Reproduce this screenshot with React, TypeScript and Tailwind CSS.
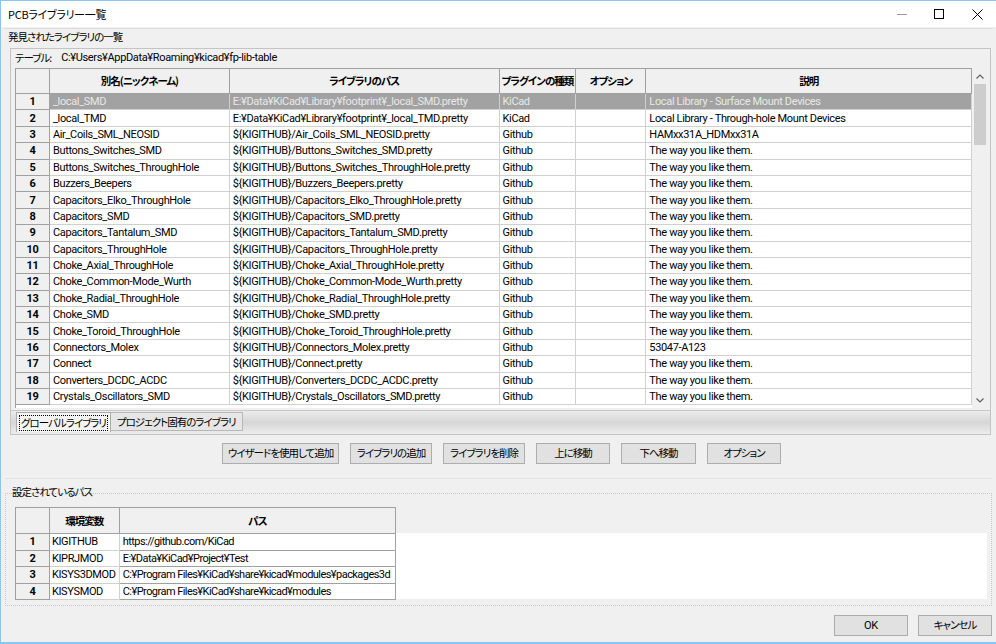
const rows: [string, string, string, string][] = [
  ["_local_SMD", "E:¥Data¥KiCad¥Library¥footprint¥_local_SMD.pretty", "KiCad", "Local Library - Surface Mount Devices"],
  ["_local_TMD", "E:¥Data¥KiCad¥Library¥footprint¥_local_TMD.pretty", "KiCad", "Local Library - Through-hole Mount Devices"],
  ["Air_Coils_SML_NEOSID", "${KIGITHUB}/Air_Coils_SML_NEOSID.pretty", "Github", "HAMxx31A_HDMxx31A"],
  ["Buttons_Switches_SMD", "${KIGITHUB}/Buttons_Switches_SMD.pretty", "Github", "The way you like them."],
  ["Buttons_Switches_ThroughHole", "${KIGITHUB}/Buttons_Switches_ThroughHole.pretty", "Github", "The way you like them."],
  ["Buzzers_Beepers", "${KIGITHUB}/Buzzers_Beepers.pretty", "Github", "The way you like them."],
  ["Capacitors_Elko_ThroughHole", "${KIGITHUB}/Capacitors_Elko_ThroughHole.pretty", "Github", "The way you like them."],
  ["Capacitors_SMD", "${KIGITHUB}/Capacitors_SMD.pretty", "Github", "The way you like them."],
  ["Capacitors_Tantalum_SMD", "${KIGITHUB}/Capacitors_Tantalum_SMD.pretty", "Github", "The way you like them."],
  ["Capacitors_ThroughHole", "${KIGITHUB}/Capacitors_ThroughHole.pretty", "Github", "The way you like them."],
  ["Choke_Axial_ThroughHole", "${KIGITHUB}/Choke_Axial_ThroughHole.pretty", "Github", "The way you like them."],
  ["Choke_Common-Mode_Wurth", "${KIGITHUB}/Choke_Common-Mode_Wurth.pretty", "Github", "The way you like them."],
  ["Choke_Radial_ThroughHole", "${KIGITHUB}/Choke_Radial_ThroughHole.pretty", "Github", "The way you like them."],
  ["Choke_SMD", "${KIGITHUB}/Choke_SMD.pretty", "Github", "The way you like them."],
  ["Choke_Toroid_ThroughHole", "${KIGITHUB}/Choke_Toroid_ThroughHole.pretty", "Github", "The way you like them."],
  ["Connectors_Molex", "${KIGITHUB}/Connectors_Molex.pretty", "Github", "53047-A123"],
  ["Connect", "${KIGITHUB}/Connect.pretty", "Github", "The way you like them."],
  ["Converters_DCDC_ACDC", "${KIGITHUB}/Converters_DCDC_ACDC.pretty", "Github", "The way you like them."],
  ["Crystals_Oscillators_SMD", "${KIGITHUB}/Crystals_Oscillators_SMD.pretty", "Github", "The way you like them."],
];

const envRows: [string, string][] = [
  ["KIGITHUB", "https://github.com/KiCad"],
  ["KIPRJMOD", "E:¥Data¥KiCad¥Project¥Test"],
  ["KISYS3DMOD", "C:¥Program Files¥KiCad¥share¥kicad¥modules¥packages3d"],
  ["KISYSMOD", "C:¥Program Files¥KiCad¥share¥kicad¥modules"],
];

// latin text is narrow (Meiryo UI-like), japanese uses proportional kana
const lat = "font-['Roboto','Liberation_Sans',sans-serif] text-[11px] tracking-[-0.35px]";
const jp = "font-['Noto_Sans_CJK_JP','Noto_Sans',sans-serif] text-[10.5px] tracking-[-1px] [font-feature-settings:'palt']";

function Btn({ label, w, latin }: { label: string; w: string; latin?: boolean }) {
  return (
    <button
      type="button"
      className={`${w} h-[21px] border border-[#adadad] bg-[#e1e1e1] text-black leading-none ${latin ? lat : jp}`}
    >
      {label}
    </button>
  );
}

export default function App() {
  return (
    <div className="w-[996px] h-[644px] bg-[#f0f0f0] border-t border-l border-b-2 border-[#8cc6f0] flex flex-col text-black overflow-hidden">
      {/* Title bar */}
      <div className="h-[26px] bg-white flex items-center shrink-0">
        <span className="pl-[7px] font-['Noto_Sans_CJK_JP',sans-serif] text-[11px] tracking-[-0.3px] [font-feature-settings:'palt']">PCBライブラリー一覧</span>
        <div className="ml-auto flex items-center h-full">
          <div className="w-[36px] flex justify-center">
            <div className="w-[10px] h-px bg-[#999]" />
          </div>
          <div className="w-[38px] flex justify-center">
            <div className="w-[10px] h-[10px] border border-black" />
          </div>
          <div className="w-[38px] flex justify-center">
            <svg width="11" height="11" viewBox="0 0 11 11">
              <path d="M0.5 0.5 L10.5 10.5 M10.5 0.5 L0.5 10.5" stroke="#000" strokeWidth="1" />
            </svg>
          </div>
        </div>
      </div>

      {/* Library group */}
      <div className="mx-[3px] mt-[1px] border-t border-[#dcdcdc]">
        <div className={`pl-[4px] h-[16px] leading-[16px] ${jp} tracking-[-1.3px]`}>発見されたライブラリの一覧</div>
        <div className="ml-[6px] mr-[2px] mt-[3px] h-[387px] border border-[#c4c4c4] bg-[#f0f0f0] flex flex-col">
          <div className="h-[18px] flex items-center pl-[4px] gap-[10px]">
            <span className={jp}>テーブル:</span>
            <span className={lat}>C:¥Users¥AppData¥Roaming¥kicad¥fp-lib-table</span>
          </div>
          <div className="ml-[4px] mr-[1px] mt-[1px] h-[340px] flex">
            <div className="w-[957px] bg-white border-l border-t border-[#a0a0a0] flex flex-col overflow-hidden">
              {/* header */}
              <div className={`h-[25px] flex shrink-0 bg-[#f0f0f0] font-bold ${jp}`}>
                <div className="w-[34px] border-r border-b border-[#a0a0a0]" />
                <div className="w-[180px] border-r border-b border-[#a0a0a0] flex items-center justify-center">別名(ニックネーム)</div>
                <div className="w-[270px] border-r border-b border-[#a0a0a0] flex items-center justify-center">ライブラリのパス</div>
                <div className="w-[77px] border-r border-b border-[#a0a0a0] flex items-center justify-center whitespace-nowrap">プラグインの種類</div>
                <div className="w-[70px] border-r border-b border-[#a0a0a0] flex items-center justify-center">オプション</div>
                <div className="w-[326px] border-r border-b border-[#a0a0a0] flex items-center justify-center">説明</div>
              </div>
              {rows.map((r, i) => {
                const sel = i === 0;
                const cell = sel
                  ? "bg-[#a2a2a2] text-[#e8e8e8] border-r border-b border-[#d0d0d0]"
                  : "border-r border-b border-[#d0d0d0]";
                return (
                  <div key={i} className={`h-[16.4px] flex shrink-0 leading-none ${lat}`}>
                    <div className="w-[34px] bg-[#f0f0f0] border-r border-b border-[#a0a0a0] flex items-center justify-center font-bold">
                      {i + 1}
                    </div>
                    <div className={`w-[180px] pl-[3px] flex items-center whitespace-nowrap ${cell}`}>{r[0]}</div>
                    <div className={`w-[270px] pl-[3px] flex items-center whitespace-nowrap ${cell}`}>{r[1]}</div>
                    <div className={`w-[77px] pl-[3px] flex items-center whitespace-nowrap ${cell}`}>{r[2]}</div>
                    <div className={`w-[70px] ${cell}`} />
                    <div className={`w-[326px] pl-[3px] flex items-center whitespace-nowrap ${cell}`}>{r[3]}</div>
                  </div>
                );
              })}
            </div>
            {/* scrollbar */}
            <div className="w-[16px] flex flex-col items-center bg-[#f0f0f0]">
              <div className="h-[16px] flex items-center justify-center">
                <svg width="8" height="5" viewBox="0 0 8 5">
                  <path d="M0.5 4.5 L4 1 L7.5 4.5" stroke="#606060" strokeWidth="1.2" fill="none" />
                </svg>
              </div>
              <div className="w-[12px] h-[61px] bg-[#cdcdcd]" />
              <div className="flex-1" />
              <div className="h-[16px] flex items-center justify-center">
                <svg width="8" height="5" viewBox="0 0 8 5">
                  <path d="M0.5 0.5 L4 4 L7.5 0.5" stroke="#606060" strokeWidth="1.2" fill="none" />
                </svg>
              </div>
            </div>
          </div>
          {/* tabs */}
          <div className={`mt-[2px] flex-1 bg-gradient-to-b from-[#ececec] via-[#d6d6d6] to-[#ededed] border-t border-[#c8c8c8] flex items-start pl-[5px] ${jp}`}>
            <div className="h-[20px] mt-[1px] px-[2px] bg-[#f4f4f4] border border-[#adadad] border-b-0 flex items-center">
              <span className="px-[1px] border border-dotted border-black leading-[14px]">グローバルライブラリ</span>
            </div>
            <div className="h-[19px] mt-[1px] px-[6px] bg-[#e6e6e6] border border-[#b8b8b8] border-l-0 flex items-center">
              プロジェクト固有のライブラリ
            </div>
          </div>
        </div>
      </div>

      {/* action buttons */}
      <div className="mt-[8px] flex gap-[11px] pl-[221px]">
        <Btn label="ウイザードを使用して追加" w="w-[117px]" />
        <Btn label="ライブラリの追加" w="w-[82px]" />
        <Btn label="ライブラリを削除" w="w-[82px]" />
        <Btn label="上に移動" w="w-[74px]" />
        <Btn label="下へ移動" w="w-[75px]" />
        <Btn label="オプション" w="w-[74px]" />
      </div>

      <div className="mt-[14px] mx-[4px] h-px bg-[#e2e2e2]" />

      {/* paths group */}
      <div className="mt-[6px] mx-[4px]">
        <div className={`pl-[7px] h-[14px] leading-[14px] ${jp}`}>設定されているパス</div>
        <div className="-mt-[6px] h-[113px] border border-dotted border-[#c8c8c8] pt-[13px] pl-[9px] pr-[4px]">
          <div className="flex">
            <div className="w-[381px] border-l border-t border-[#a0a0a0] bg-[#f0f0f0]">
              <div className={`h-[26px] flex font-bold ${jp}`}>
                <div className="w-[34px] border-r border-b border-[#a0a0a0]" />
                <div className="w-[70px] border-r border-b border-[#a0a0a0] flex items-center justify-center">環境変数</div>
                <div className="w-[277px] border-r border-b border-[#a0a0a0] flex items-center justify-center">パス</div>
              </div>
              {envRows.map((r, i) => (
                <div key={i} className={`h-[16.5px] flex leading-none ${lat}`}>
                  <div className="w-[34px] border-r border-b border-[#a0a0a0] flex items-center justify-center font-bold">{i + 1}</div>
                  <div className="w-[70px] bg-white border-r border-b border-[#d0d0d0] pl-[2px] flex items-center whitespace-nowrap">{r[0]}</div>
                  <div className="w-[277px] bg-white border-r border-b border-[#a0a0a0] pl-[3px] flex items-center whitespace-nowrap tracking-[-0.55px]">{r[1]}</div>
                </div>
              ))}
            </div>
            <div className="flex-1 flex flex-col">
              <div className="h-[26px]" />
              <div className="h-[66px] bg-white" />
            </div>
          </div>
        </div>
      </div>

      {/* OK / Cancel */}
      <div className="mt-[9px] flex justify-end gap-[10px] pr-[4px]">
        <Btn label="OK" w="w-[74px]" latin />
        <Btn label="キャンセル" w="w-[74px]" />
      </div>
    </div>
  );
}
